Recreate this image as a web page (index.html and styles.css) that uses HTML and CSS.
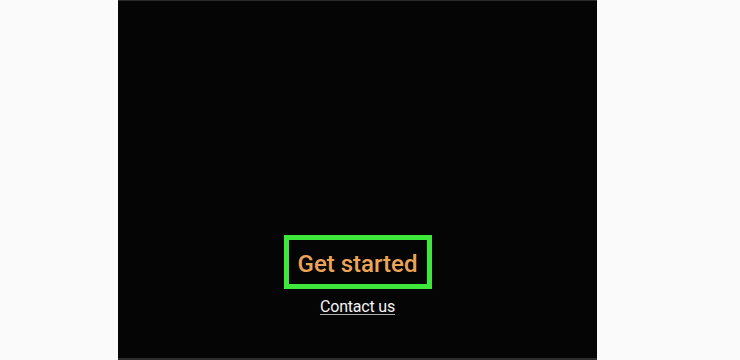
FILE: index.html
```html
<!DOCTYPE html>
<html>
<head>
<meta charset="utf-8">
<link rel="stylesheet" href="styles.css">
</head>
<body>
<main class="panel">
  <a class="cta" href="#">Get started</a>
  <a class="contact" href="#">Contact us</a>
</main>
</body>
</html>
```
FILE: styles.css
```css
html, body {
  margin: 0;
  padding: 0;
  background: #fafafa;
}
.panel {
  box-sizing: border-box;
  width: 479px;
  height: 360px;
  margin-left: 118px;
  background: #050505;
  border-top: 1px solid #2c2c2c;
  border-bottom: 2px solid #2c2c2c;
  display: flex;
  flex-direction: column;
  align-items: center;
  justify-content: flex-end;
  padding-bottom: 42px;
  font-family: Roboto, "Liberation Sans", sans-serif;
}
.cta {
  box-sizing: border-box;
  width: 148px;
  height: 54px;
  border: 5px solid #3de83a;
  display: flex;
  align-items: center;
  justify-content: center;
  color: #eba458;
  font-size: 24px;
  font-weight: 500;
  text-decoration: none;
  padding-top: 4px;
}
.contact {
  margin-top: 9px;
  color: #f4f4f4;
  font-size: 16px;
  font-weight: 400;
  letter-spacing: -0.2px;
  line-height: 18px;
  text-decoration: underline;
  text-decoration-color: #b0b0b0;
  text-underline-offset: 2px;
}
```
